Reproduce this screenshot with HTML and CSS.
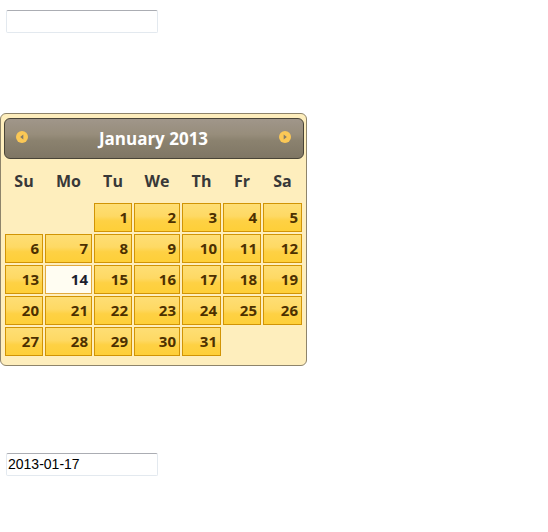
FILE: index.html
```html
<!DOCTYPE html>
<html lang="en">
<head>
    <meta charset="UTF-8">
    <meta name="viewport" content="width=device-width, initial-scale=1.0">
    <title>Datepicker</title>
    <link rel="stylesheet" href="styles.css">
</head>
<body>
    <!-- Date input (empty) -->
    <input type="text" class="date-field">

    <!-- Datepicker widget -->
    <div class="datepicker">
        <div class="dp-header">
            <a class="dp-nav" title="Prev">
                <svg width="12" height="12" viewBox="0 0 12 12"><circle cx="6" cy="6" r="6" fill="#fbc856"/><path d="M7.3 3.6 L4.2 6 L7.3 8.4 Z" fill="#857c69"/></svg>
            </a>
            <div class="dp-title">January 2013</div>
            <a class="dp-nav" title="Next">
                <svg width="12" height="12" viewBox="0 0 12 12"><circle cx="6" cy="6" r="6" fill="#fbc856"/><path d="M4.7 3.6 L7.8 6 L4.7 8.4 Z" fill="#857c69"/></svg>
            </a>
        </div>

        <div class="dp-weekdays">
            <span>Su</span><span>Mo</span><span>Tu</span><span>We</span><span>Th</span><span>Fr</span><span>Sa</span>
        </div>

        <div class="dp-days">
            <span></span><span></span>
            <a class="day">1</a><a class="day">2</a><a class="day">3</a><a class="day">4</a><a class="day">5</a>
            <a class="day">6</a><a class="day">7</a><a class="day">8</a><a class="day">9</a><a class="day">10</a><a class="day">11</a><a class="day">12</a>
            <a class="day">13</a><a class="day selected">14</a><a class="day">15</a><a class="day">16</a><a class="day">17</a><a class="day">18</a><a class="day">19</a>
            <a class="day">20</a><a class="day">21</a><a class="day">22</a><a class="day">23</a><a class="day">24</a><a class="day">25</a><a class="day">26</a>
            <a class="day">27</a><a class="day">28</a><a class="day">29</a><a class="day">30</a><a class="day">31</a>
        </div>
    </div>

    <!-- Date input (filled) -->
    <input type="text" class="date-field second" value="2013-01-17">
</body>
</html>
```

FILE: styles.css
```css
body {
    margin: 0;
    padding: 10px 0 0 0;
    font-family: "Open Sans", "Noto Sans", sans-serif;
    background: #fff;
}
.date-field {
    display: block;
    margin: 0 0 0 6px;
    width: 152px;
    height: 23px;
    box-sizing: border-box;
    border: 1px solid #e3e9ef;
    border-top-color: #abadb3;
    border-radius: 2px;
    padding: 0 1px 2px;
    font: 14px "Liberation Sans", Arial, sans-serif;
    color: #000;
    outline: none;
}
.date-field.second {
    margin-top: 87px;
}
.datepicker {
    margin-top: 80px;
    width: 307px;
    box-sizing: border-box;
    padding: 4px 2px 9px 3px;
    border: 1px solid #8e846b;
    border-radius: 6px;
    background: #feeebd;
}
.dp-header {
    display: flex;
    align-items: center;
    height: 41px;
    box-sizing: border-box;
    padding: 0 12px 0 11px;
    border: 1px solid #494437;
    border-radius: 6px;
    background: linear-gradient(#a0968a 0%, #978d7b 40%, #8b826f 55%, #7f7664 100%);
    color: #fff;
}
.dp-nav {
    display: flex;
    width: 12px;
    height: 12px;
    margin-top: -3px;
    cursor: pointer;
}
.dp-title {
    flex: 1;
    text-align: center;
    font-size: 17px;
    font-weight: bold;
}
.dp-weekdays,
.dp-days {
    display: grid;
    grid-template-columns: 38px 47px 38px 46px 39px 38px 39px;
    column-gap: 2px;
    padding-left: 1px;
}
.dp-weekdays {
    height: 44px;
    align-items: center;
    text-align: center;
    font-size: 16px;
    font-weight: bold;
    color: #383838;
}
.dp-days {
    grid-auto-rows: 29px;
    row-gap: 2px;
}
.day {
    box-sizing: border-box;
    border: 1px solid #d19405;
    background: linear-gradient(#fede75 0%, #fed964 45%, #fed144 62%, #fecf38 100%);
    color: #4c3000;
    font-size: 15px;
    font-weight: bold;
    line-height: 27px;
    text-align: right;
    padding-right: 3px;
    cursor: pointer;
}
.day.selected {
    border-color: #e2aa3e;
    background: #fffdf2;
    color: #1c1f2e;
}
```
